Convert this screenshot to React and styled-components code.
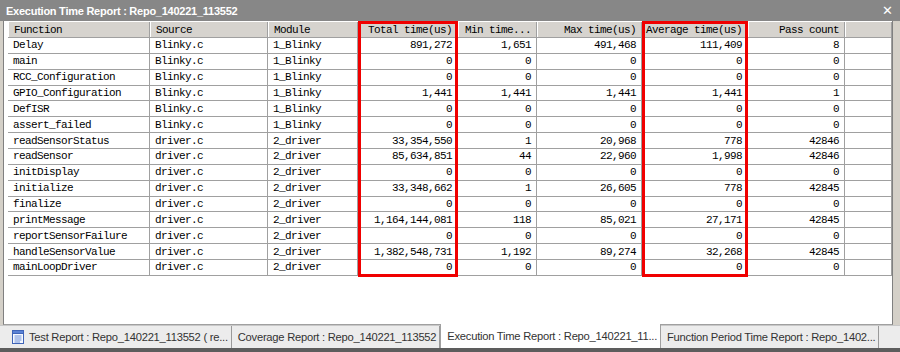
import React from 'react'
import styled, { createGlobalStyle } from 'styled-components'

const GlobalStyle = createGlobalStyle`
  html, body { margin: 0; padding: 0; background: #d4d0c8; }
  #root { width: 900px; height: 352px; overflow: hidden; }
`

const columns = [
  { key: 'fn', title: 'Function', width: 142, align: 'left' },
  { key: 'src', title: 'Source', width: 118, align: 'left' },
  { key: 'mod', title: 'Module', width: 90, align: 'left' },
  { key: 'total', title: 'Total time(us)', width: 100, align: 'right', marked: true },
  { key: 'min', title: 'Min time...', width: 79, align: 'right' },
  { key: 'max', title: 'Max time(us)', width: 105, align: 'right' },
  { key: 'avg', title: 'Average time(us)', width: 106, align: 'right', marked: true },
  { key: 'pass', title: 'Pass count', width: 97, align: 'right' },
]

const rows = [
  ['Delay', 'Blinky.c', '1_Blinky', '891,272', '1,651', '491,468', '111,409', '8'],
  ['main', 'Blinky.c', '1_Blinky', '0', '0', '0', '0', '0'],
  ['RCC_Configuration', 'Blinky.c', '1_Blinky', '0', '0', '0', '0', '0'],
  ['GPIO_Configuration', 'Blinky.c', '1_Blinky', '1,441', '1,441', '1,441', '1,441', '1'],
  ['DefISR', 'Blinky.c', '1_Blinky', '0', '0', '0', '0', '0'],
  ['assert_failed', 'Blinky.c', '1_Blinky', '0', '0', '0', '0', '0'],
  ['readSensorStatus', 'driver.c', '2_driver', '33,354,550', '1', '20,968', '778', '42846'],
  ['readSensor', 'driver.c', '2_driver', '85,634,851', '44', '22,960', '1,998', '42846'],
  ['initDisplay', 'driver.c', '2_driver', '0', '0', '0', '0', '0'],
  ['initialize', 'driver.c', '2_driver', '33,348,662', '1', '26,605', '778', '42845'],
  ['finalize', 'driver.c', '2_driver', '0', '0', '0', '0', '0'],
  ['printMessage', 'driver.c', '2_driver', '1,164,144,081', '118', '85,021', '27,171', '42845'],
  ['reportSensorFailure', 'driver.c', '2_driver', '0', '0', '0', '0', '0'],
  ['handleSensorValue', 'driver.c', '2_driver', '1,382,548,731', '1,192', '89,274', '32,268', '42845'],
  ['mainLoopDriver', 'driver.c', '2_driver', '0', '0', '0', '0', '0'],
]

const tabs = [
  { label: 'Test Report : Repo_140221_113552 ( re...', icon: true },
  { label: 'Coverage Report : Repo_140221_113552' },
  { label: 'Execution Time Report : Repo_140221_11...', active: true },
  { label: 'Function Period Time Report : Repo_1402...' },
]

const ROW_H = 15.86
const HEAD_H = 16

function DocIcon() {
  return (
    <svg width="12" height="14" viewBox="0 0 12 14">
      <rect x="0.5" y="0.5" width="11" height="13" fill="#f4f8ff" stroke="#3f64b8" />
      <rect x="0.5" y="0.5" width="11" height="3" fill="#5a82d6" stroke="#3f64b8" />
      <line x1="2.5" y1="6" x2="9.5" y2="6" stroke="#6d8fd8" />
      <line x1="2.5" y1="8" x2="9.5" y2="8" stroke="#6d8fd8" />
      <line x1="2.5" y1="10" x2="9.5" y2="10" stroke="#6d8fd8" />
      <line x1="2.5" y1="12" x2="8" y2="12" stroke="#6d8fd8" />
    </svg>
  )
}

export default function App() {
  let left = 0
  const marks = columns.map((c) => {
    const m = c.marked ? { left, width: c.width } : null
    left += c.width
    return m
  }).filter(Boolean)

  return (
    <Window>
      <GlobalStyle />
      <TitleBar>
        <Title>Execution Time Report : Repo_140221_113552</Title>
        <Close>✕</Close>
      </TitleBar>
      <Pane>
        <Grid>
          <HeadRow>
            {columns.map((c) => (
              <HeadCell key={c.key} $w={c.width} $align={c.align}>{c.title}</HeadCell>
            ))}
            <HeadCell $fill />
          </HeadRow>
          {rows.map((r) => (
            <Row key={r[0]}>
              {r.map((v, i) => (
                <Cell key={i} $w={columns[i].width} $align={columns[i].align}>{v}</Cell>
              ))}
              <Cell $fill />
            </Row>
          ))}
          {marks.map((m, i) => (
            <Marker
              key={i}
              style={{ left: m.left, width: m.width, height: HEAD_H + ROW_H * rows.length + 2 }}
            />
          ))}
        </Grid>
      </Pane>
      <TabStrip>
        {tabs.map((t) => (
          <Tab key={t.label} $active={t.active} $icon={t.icon}>
            {t.icon && <DocIcon />}
            {t.label}
          </Tab>
        ))}
      </TabStrip>
    </Window>
  )
}

const Window = styled.div`
  width: 900px;
  height: 352px;
  display: flex;
  flex-direction: column;
  background: #d4d0c8;
  border-bottom: 4px solid #5d5d5d;
  box-sizing: border-box;
`

const TitleBar = styled.div`
  height: 21px;
  flex: none;
  background: #878787;
  display: flex;
  align-items: center;
  justify-content: space-between;
  padding: 0 7px 0 6px;
  color: #fff;
`

const Title = styled.div`
  font-family: 'Liberation Sans', Arial, sans-serif;
  font-weight: bold;
  font-size: 11px;
  letter-spacing: -0.25px;
`

const Close = styled.div`
  font-family: 'DejaVu Sans', sans-serif;
  font-size: 13px;
  font-weight: bold;
`

const Pane = styled.div`
  flex: 1;
  margin: 0 7px 0 3px;
  border-left: 1px solid #808080;
  border-right: 1px solid #808080;
  border-bottom: 1px solid #a0a0a0;
  background: #fff;
  padding: 1px 0 0 4px;
  overflow: hidden;
`

const Grid = styled.div`
  position: relative;
  font-family: 'Liberation Mono', monospace;
  font-size: 11px;
  letter-spacing: -0.6px;
  color: #000;
`

const HeadRow = styled.div`
  display: flex;
  height: ${HEAD_H}px;
  background: #d6d3ce;
  border-bottom: 1px solid #a0a0a0;
  box-sizing: border-box;
`

const HeadCell = styled.div`
  ${(p) => (p.$fill ? 'flex: 1;' : `width: ${p.$w}px; flex: none;`)}
  box-sizing: border-box;
  display: flex;
  align-items: center;
  justify-content: ${(p) => (p.$align === 'right' ? 'flex-end' : 'flex-start')};
  padding: 0 5px;
  border-left: 1px solid #fff;
  border-right: 1px solid #a0a0a0;
  white-space: nowrap;
  overflow: hidden;
`

const Row = styled.div`
  display: flex;
  height: ${ROW_H}px;
  border-bottom: 1px solid #a0a0a0;
  box-sizing: border-box;
`

const Cell = styled.div`
  ${(p) => (p.$fill ? 'flex: 1;' : `width: ${p.$w}px; flex: none;`)}
  box-sizing: border-box;
  display: flex;
  align-items: center;
  justify-content: ${(p) => (p.$align === 'right' ? 'flex-end' : 'flex-start')};
  padding: 0 5px;
  border-right: 1px solid #a0a0a0;
  white-space: nowrap;
`

const Marker = styled.div`
  position: absolute;
  top: -1px;
  border: 3px solid #f00000;
  box-sizing: border-box;
  pointer-events: none;
`

const TabStrip = styled.div`
  height: 22px;
  flex: none;
  display: flex;
  align-items: stretch;
  background: #ececec;
  padding-left: 8px;
  border-top: 1px solid #c8c8c8;
`

const Tab = styled.div`
  display: flex;
  align-items: center;
  gap: 5px;
  padding: 0 3px 0 ${(p) => (p.$icon ? '4px' : '6px')};
  font-family: 'Liberation Sans', Arial, sans-serif;
  font-size: 11.2px;
  color: #333;
  white-space: nowrap;
  background: ${(p) => (p.$active ? '#fff' : 'transparent')};
  border-right: 1px solid ${(p) => (p.$active ? '#a0a0a0' : '#9a9a9a')};
  border-left: ${(p) => (p.$active ? '1px solid #a0a0a0' : 'none')};
  margin-top: ${(p) => (p.$active ? '-2px' : '0')};
  letter-spacing: -0.25px;
`
